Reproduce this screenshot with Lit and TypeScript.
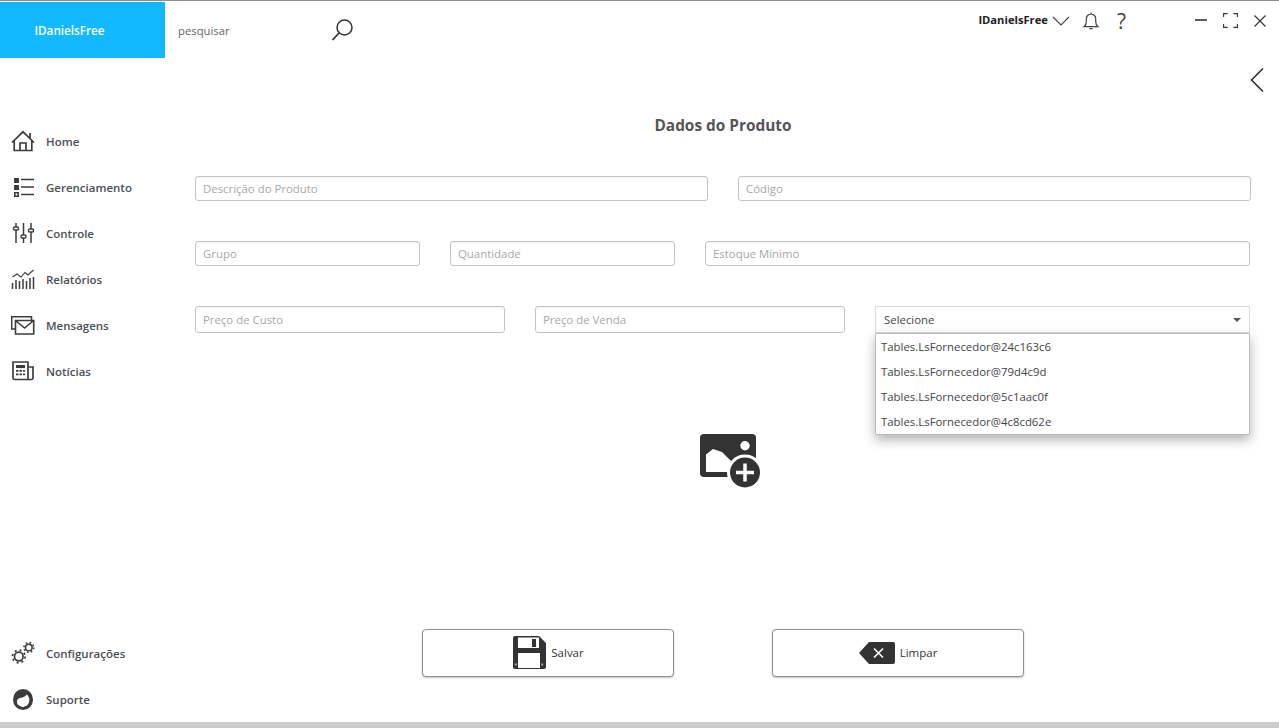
import { LitElement, html, css, svg } from "lit";
import { customElement } from "lit/decorators.js";

const I = {
  home: svg`<path d="M1 13.500 12 2.800l11 10.700M3.200 11.500v10h17.600v-10M9 21.500v-7.500h6v7.500M19 4v5" fill="none" stroke="currentColor" stroke-width="1.700"/>`,
  list: svg`<path d="M3 3h5v5H3zM3 10h5v5H3z" fill="currentColor"/><path d="M3.800 17.800h3.400v3.400H3.800z" fill="none" stroke="currentColor" stroke-width="1.600"/><path d="M10 4.500h13M10 12h13M10 19.500h13" stroke="currentColor" stroke-width="1.700"/>`,
  sliders: svg`<path d="M5 2v20M12.500 2v20M20 2v20" stroke="currentColor" stroke-width="1.500"/><rect x="2.500" y="6" width="5" height="3" rx="1.200" fill="#fff" stroke="currentColor" stroke-width="1.400"/><rect x="10" y="14" width="5" height="3" rx="1.200" fill="#fff" stroke="currentColor" stroke-width="1.400"/><rect x="17.500" y="8" width="5" height="3" rx="1.200" fill="#fff" stroke="currentColor" stroke-width="1.400"/>`,
  chart: svg`<path d="M1.500 10 6 7l4 3 4-4.500 3 2.500 5.500-5" fill="none" stroke="currentColor" stroke-width="1.100"/><path d="M1.500 16v6M5 13v9M8.500 14v8M12 12v10M15.500 14v8M19 11v11M22.500 10v12" stroke="currentColor" stroke-width="1.500"/>`,
  mail: svg`<path d="M4 16H.7V3.700h19.800V7" fill="none" stroke="currentColor" stroke-width="1.500"/><path d="M4.500 7.500h18.200V21H4.500zM5 8l8.600 7L22 8" fill="none" stroke="currentColor" stroke-width="1.600"/>`,
  news: svg`<path d="M17 20.500H3.500A1.500 1.500 0 0 1 2 19V3h15v17.500h3.500A1.500 1.500 0 0 0 22 19V8h-5" fill="none" stroke="currentColor" stroke-width="1.700"/><path d="M5 6h9v3H5zM5 11h2.500v1.800H5zM8.500 11H11v1.800H8.500zM12 11h2v1.800h-2zM5 14.500h2.500v1.800H5zM8.500 14.500H11v1.800H8.500zM12 14.500h2v1.800h-2z" fill="currentColor"/>`,
  gears: svg`<g fill="none" stroke="currentColor"><circle cx="7.800" cy="15.500" r="4.300" stroke-width="1.700"/><circle cx="7.800" cy="15.500" r="6.300" stroke-width="1.800" stroke-dasharray="2 2.950"/><circle cx="17.800" cy="6.500" r="3.300" stroke-width="1.500"/><circle cx="17.800" cy="6.500" r="4.900" stroke-width="1.600" stroke-dasharray="1.700 2.150"/></g>`,
  support: svg`<ellipse cx="12" cy="12.500" rx="10" ry="10.500" fill="currentColor"/><path d="M6 16C5.500 13 7 11.500 9 11c3-.5 6-2 7-3.500 2 2.500 3 4.500 2 7.500-.5 2-2 4.500-5 5-3 .5-6-1-7-4z" fill="#fff"/><path d="M7 18.500c2 2.500 5 3 8 1" fill="none" stroke="currentColor" stroke-width="1.500"/>`,
};

@customElement("app-root")
export class AppRoot extends LitElement {
  static styles = css`
    :host { display: block; height: 728px; overflow: hidden; background: #fff; font-family: "Open Sans", "Liberation Sans", sans-serif; color: #333; }
    .window { height: 728px; display: grid; grid-template-rows: 2px 56px 1fr 6px; grid-template-columns: 165px 1fr; }
    .topline { grid-column: 1 / 3; background: #8f8f8f; border-bottom: 1px solid #fff; }
    .bottomline { grid-column: 1 / 3; background: #ccc; }
    .brand { background: #12b9fe; color: #fff; font-size: 11.700px; font-weight: 600; display: flex; align-items: center; justify-content: center; padding-right: 26px; box-sizing: border-box; }
    .header { display: flex; align-items: flex-start; }
    .search { display: flex; align-items: center; height: 56px; padding-left: 13px; width: 190px; justify-content: space-between; color: #666; font-size: 11.300px; box-sizing: border-box; }
    .search svg { width: 24px; height: 24px; color: #333; }
    .spacer { flex: 1; }
    .user { display: flex; align-items: center; height: 34px; font-size: 11.200px; font-weight: 700; color: #222; }
    .user svg { display: block; color: #444; }
    .chev { width: 18px; height: 10px; margin-left: 4px; margin-top: 3px; }
    .bell { width: 18px; height: 18px; margin-left: 12px; margin-top: 4px; }
    .help { font-size: 21px; font-weight: 400; color: #444; margin-left: 17px; line-height: 20px; margin-top: 3px; }
    .win { display: flex; align-items: center; gap: 16px; height: 38px; margin-left: 69px; margin-right: 13px; }
    .win svg { width: 12px; height: 12px; color: #333; display: block; }
    .win svg.max { width: 15px; height: 15px; margin-top: -2px; }
    .win svg.min { margin-top: -2px; }
    .sidebar { display: flex; flex-direction: column; justify-content: space-between; padding-top: 60px; box-sizing: border-box; }
    .nav { display: flex; flex-direction: column; }
    .item { height: 46px; display: flex; align-items: center; font-size: 11.500px; font-weight: 600; color: #4a4f55; }
    .item svg { width: 24px; height: 24px; margin-left: 11px; margin-right: 11px; color: #3c3c3c; flex: none; }
    .main { display: flex; flex-direction: column; padding: 0 28px 0 30px; min-width: 0; }
    .back { align-self: flex-end; margin-right: -14px; margin-top: 9px; width: 16px; height: 26px; color: #333; display: block; }
    .title { text-align: center; font-size: 15.400px; font-weight: 700; color: #555; margin-top: 23px; line-height: 20px; }
    .row { display: flex; gap: 30px; margin-top: 40px; height: 25px; }
    .row.tall { height: 27px; }
    .field { border: 1px solid #c4c4c4; border-radius: 3px; box-sizing: border-box; height: 100%; padding: 0 7px; display: flex; align-items: center; color: #a8a8a8; font-size: 11.400px; background: #fff; box-shadow: inset 0 2px 2px -1px #f1f1f1; min-width: 0; }
    .w1 { width: 513px; }
    .w2 { width: 513px; }
    .w3 { width: 225px; }
    .w4 { width: 545px; }
    .w5 { width: 310px; }
    .selectwrap { width: 375px; position: relative; height: 100%; }
    .select { border: 1px solid #dcdcdc; box-sizing: border-box; height: 100%; display: flex; align-items: center; justify-content: space-between; padding: 0 8px; font-size: 11.400px; color: #444; }
    .caret { width: 0; height: 0; border-left: 4px solid transparent; border-right: 4px solid transparent; border-top: 4px solid #555; }
    .menu { position: absolute; left: 0; right: 0; top: 27px; height: 102px; box-sizing: border-box; background: #fff; border: 1px solid #bbb; border-radius: 1px; box-shadow: 0 5px 12px rgba(0,0,0,.3); padding: 0; z-index: 2; }
    .opt { height: 25px; display: flex; align-items: center; padding-left: 5px; font-size: 11.400px; color: #444; }
    .photo { align-self: center; width: 64px; height: 58px; margin-top: 99px; margin-left: 14px; display: block; }
    .actions { display: flex; justify-content: center; gap: 98px; margin-top: auto; margin-bottom: 45px; }
    .btn { width: 252px; height: 48px; box-sizing: border-box; border: 1px solid #8f8f8f; border-radius: 4px; box-shadow: 0 1px 2px rgba(0,0,0,.25); background: #fff; display: flex; align-items: center; justify-content: center; gap: 5px; font-size: 11.500px; font-weight: 500; color: #333; font-family: inherit; padding: 0; }
    .btn svg { display: block; }
    .btn span { margin-top: -1px; }
  `;

  private navItem(label: string, icon: unknown) {
    return html`<div class="item"><svg viewBox="0 0 24 24">${icon}</svg><span>${label}</span></div>`;
  }

  render() {
    return html`
      <div class="window">
        <div class="topline"></div>
        <div class="brand">IDanielsFree</div>
        <div class="header">
          <div class="search">
            <span>pesquisar</span>
            <svg viewBox="0 0 24 24"><circle cx="13.500" cy="9.500" r="7.500" fill="none" stroke="currentColor" stroke-width="1.500"/><path d="M8 15 1.500 22" stroke="currentColor" stroke-width="1.800"/></svg>
          </div>
          <div class="spacer"></div>
          <div class="user">
            <span>IDanielsFree</span>
            <svg class="chev" viewBox="0 0 18 10"><path d="M1 1l8 8 8-8" fill="none" stroke="currentColor" stroke-width="1.100"/></svg>
            <svg class="bell" viewBox="0 0 16 16"><path d="M2 13h12c-1.500-1-1.800-2-1.800-4.500V6.500C12.200 3.500 10.500 2 8 2S3.800 3.500 3.800 6.500v2C3.800 11 3.500 12 2 13zM6.500 14.800h3M8 2V.500" fill="none" stroke="currentColor" stroke-width="1.100"/></svg>
            <span class="help">?</span>
          </div>
          <div class="win">
            <svg class="min" viewBox="0 0 12 12"><path d="M0 6h12" stroke="currentColor" stroke-width="1.600"/></svg>
            <svg class="max" viewBox="0 0 15 15"><path d="M.6 4V.6h4M10.400.6h4V4M14.400 11v3.400h-4M4.600 14.400h-4V11" fill="none" stroke="currentColor" stroke-width="1.100"/></svg>
            <svg viewBox="0 0 12 12"><path d="M.5.500l11 11M11.500.500l-11 11" stroke="currentColor" stroke-width="1.200"/></svg>
          </div>
        </div>
        <div class="sidebar">
          <div class="nav">
            ${this.navItem("Home", I.home)}
            ${this.navItem("Gerenciamento", I.list)}
            ${this.navItem("Controle", I.sliders)}
            ${this.navItem("Relatórios", I.chart)}
            ${this.navItem("Mensagens", I.mail)}
            ${this.navItem("Notícias", I.news)}
          </div>
          <div class="nav">
            ${this.navItem("Configurações", I.gears)}
            ${this.navItem("Suporte", I.support)}
          </div>
        </div>
        <div class="main">
          <svg class="back" viewBox="0 0 16 26"><path d="M14 1.500 2.500 13 14 24.500" fill="none" stroke="currentColor" stroke-width="1.700"/></svg>
          <div class="title">Dados do Produto</div>
          <div class="row">
            <div class="field w1">Descrição do Produto</div>
            <div class="field w2">Código</div>
          </div>
          <div class="row">
            <div class="field w3">Grupo</div>
            <div class="field w3">Quantidade</div>
            <div class="field w4">Estoque Mínimo</div>
          </div>
          <div class="row tall">
            <div class="field w5">Preço de Custo</div>
            <div class="field w5">Preço de Venda</div>
            <div class="selectwrap">
              <div class="select"><span>Selecione</span><span class="caret"></span></div>
              <div class="menu">
                <div class="opt">Tables.LsFornecedor@24c163c6</div>
                <div class="opt">Tables.LsFornecedor@79d4c9d</div>
                <div class="opt">Tables.LsFornecedor@5c1aac0f</div>
                <div class="opt">Tables.LsFornecedor@4c8cd62e</div>
              </div>
            </div>
          </div>
          <svg class="photo" viewBox="0 0 64 58">
            <path d="M6 2h48a4 4 0 0 1 4 4v39H6a4 4 0 0 1-4-4V6a4 4 0 0 1 4-4z" fill="#333"/>
            <circle cx="47" cy="13.700" r="4.700" fill="#fff"/>
            <path d="M8 40V22.500L15 17l9 3 9 9-3 11z" fill="#fff"/>
            <circle cx="47" cy="40.500" r="18" fill="#fff"/>
            <circle cx="47" cy="40.500" r="15" fill="#333"/>
            <path d="M47 31.500v18M38 40.500h18" stroke="#fff" stroke-width="3.500"/>
          </svg>
          <div class="actions">
            <button class="btn">
              <svg width="34" height="34" viewBox="0 0 34 34"><path d="M3 0h24l7 7v24a2 2 0 0 1-2 2H3a2 2 0 0 1-2-2V2a2 2 0 0 1 2-2z" fill="#333"/><path d="M6 1.500h21v10.500H6z" fill="#fff"/><path d="M20 3h4v8h-4z" fill="#333"/><path d="M6 17h22v15H6z" fill="#fff"/><path d="M2.800 27.500h2v2h-2zM29.200 27.500h2v2h-2z" fill="#aaa"/></svg>
              <span>Salvar</span>
            </button>
            <button class="btn">
              <svg width="36" height="22" viewBox="0 0 36 22"><path d="M10 0h24a2 2 0 0 1 2 2v18a2 2 0 0 1-2 2H10L0 11z" fill="#333"/><path d="M15 6.500l9 9M24 6.500l-9 9" stroke="#fff" stroke-width="1.600"/></svg>
              <span>Limpar</span>
            </button>
          </div>
        </div>
        <div class="bottomline"></div>
      </div>
    `;
  }
}
